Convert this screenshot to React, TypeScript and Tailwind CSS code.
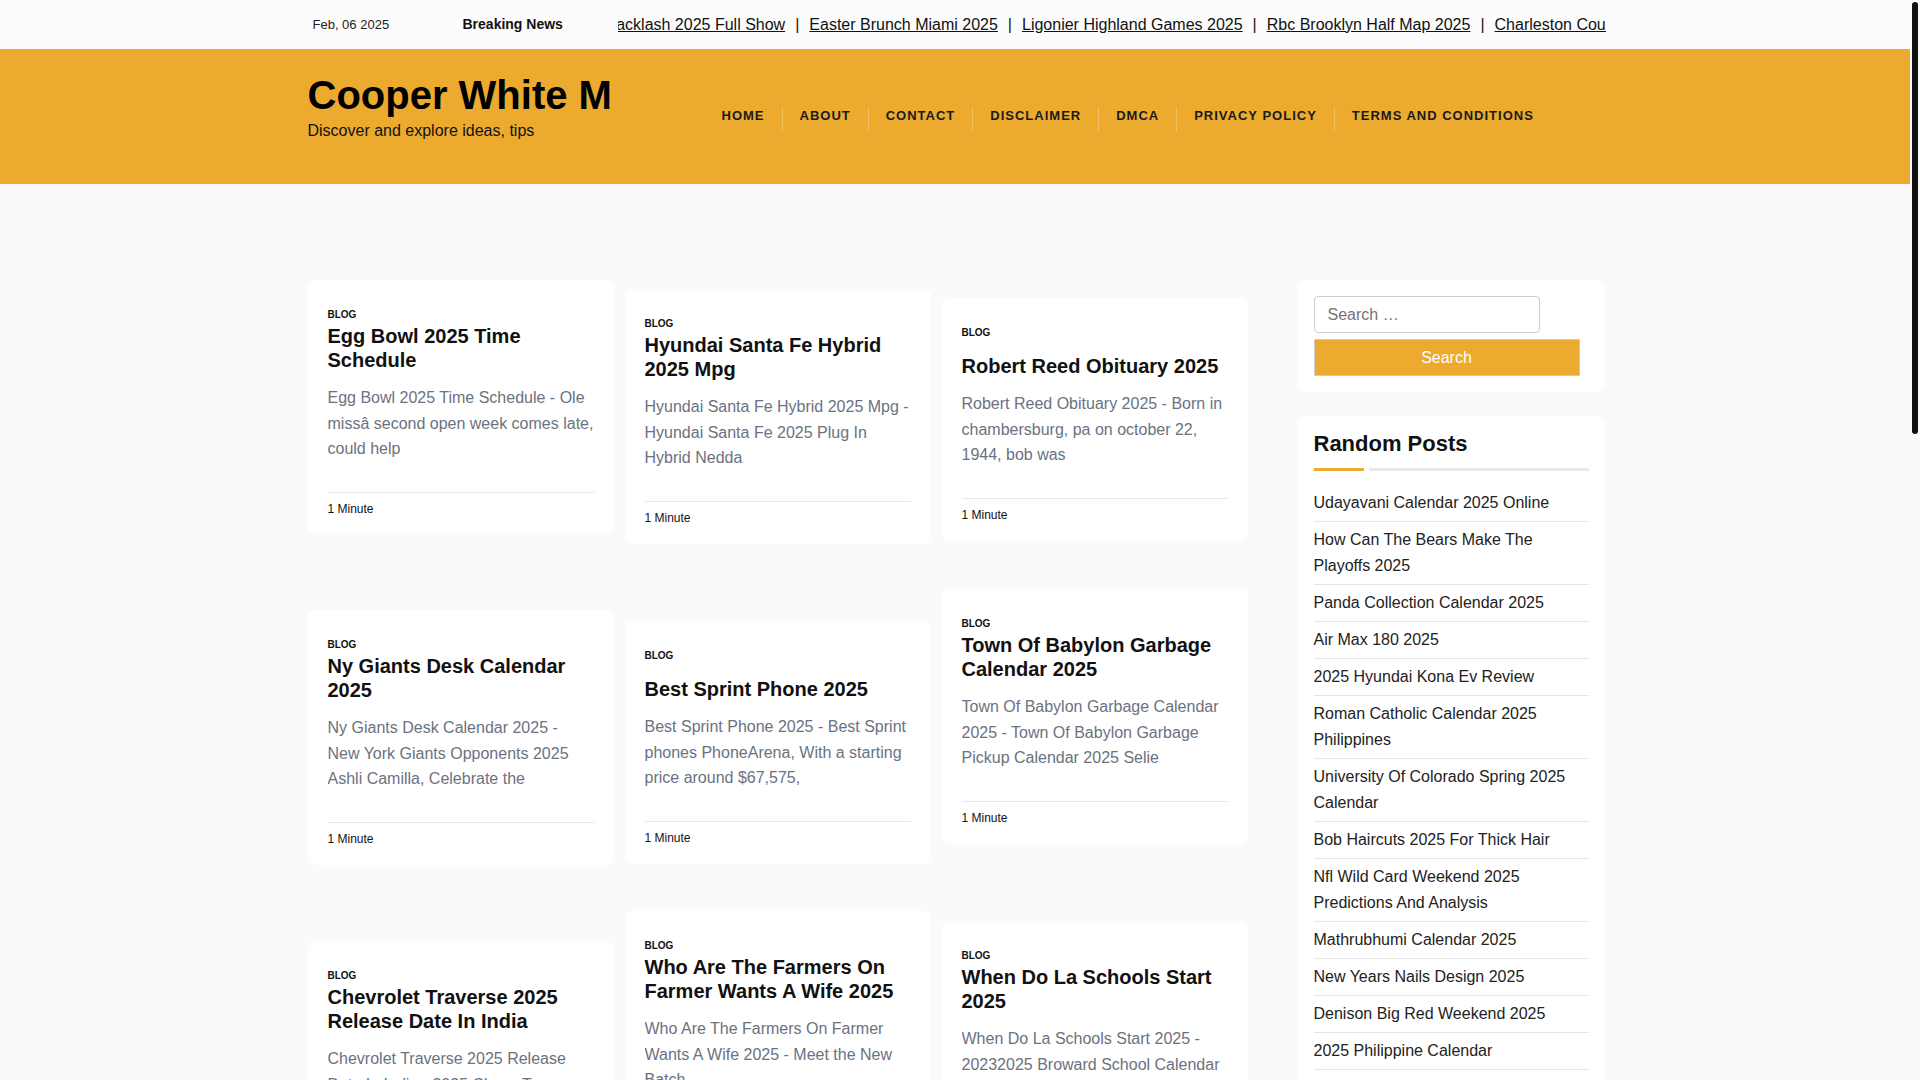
const ticker = [
  "Backlash 2025 Full Show",
  "Easter Brunch Miami 2025",
  "Ligonier Highland Games 2025",
  "Rbc Brooklyn Half Map 2025",
  "Charleston County School Calendar 2025",
];

const nav = ["Home", "About", "Contact", "Disclaimer", "DMCA", "Privacy Policy", "Terms and Conditions"];

type Post = { title: string; excerpt: string; mt: string; short?: boolean };

const columns: Post[][] = [
  [
    {
      title: "Egg Bowl 2025 Time Schedule",
      excerpt: "Egg Bowl 2025 Time Schedule - Ole missâ second open week comes late, could help",
      mt: "mt-[96px]",
    },
    {
      title: "Ny Giants Desk Calendar 2025",
      excerpt: "Ny Giants Desk Calendar 2025 - New York Giants Opponents 2025 Ashli Camilla, Celebrate the",
      mt: "mt-[75px]",
    },
    {
      title: "Chevrolet Traverse 2025 Release Date In India",
      excerpt: "Chevrolet Traverse 2025 Release Date In India - 2025 Chevy Traverse Price And Specs",
      mt: "mt-[76px]",
    },
    {
      title: "Eagles Schedule 2025 Printable",
      excerpt: "Eagles Schedule 2025 Printable - Philadelphia Eagles 2025 Schedule Printable Version",
      mt: "mt-[76px]",
    },
  ],
  [
    {
      title: "Hyundai Santa Fe Hybrid 2025 Mpg",
      excerpt: "Hyundai Santa Fe Hybrid 2025 Mpg - Hyundai Santa Fe 2025 Plug In Hybrid Nedda",
      mt: "mt-[105px]",
    },
    {
      title: "Best Sprint Phone 2025",
      excerpt: "Best Sprint Phone 2025 - Best Sprint phones PhoneArena, With a starting price around $67,575,",
      mt: "mt-[77px]",
      short: true,
    },
    {
      title: "Who Are The Farmers On Farmer Wants A Wife 2025",
      excerpt: "Who Are The Farmers On Farmer Wants A Wife 2025 - Meet the New Batch",
      mt: "mt-[47px]",
    },
    {
      title: "Lunar New Year 2025 Animal",
      excerpt: "Lunar New Year 2025 Animal - Year of the Snake, what the sign means for you",
      mt: "mt-[77px]",
      short: true,
    },
  ],
  [
    {
      title: "Robert Reed Obituary 2025",
      excerpt: "Robert Reed Obituary 2025 - Born in chambersburg, pa on october 22, 1944, bob was",
      mt: "mt-[114px]",
      short: true,
    },
    {
      title: "Town Of Babylon Garbage Calendar 2025",
      excerpt: "Town Of Babylon Garbage Calendar 2025 - Town Of Babylon Garbage Pickup Calendar 2025 Selie",
      mt: "mt-[48px]",
    },
    {
      title: "When Do La Schools Start 2025",
      excerpt: "When Do La Schools Start 2025 - 20232025 Broward School Calendar Amara",
      mt: "mt-[77px]",
    },
    {
      title: "Kentucky Derby 2025 Post Time",
      excerpt: "Kentucky Derby 2025 Post Time - What time does the race start and how to watch",
      mt: "mt-[48px]",
    },
  ],
];

const randomPosts = [
  "Udayavani Calendar 2025 Online",
  "How Can The Bears Make The Playoffs 2025",
  "Panda Collection Calendar 2025",
  "Air Max 180 2025",
  "2025 Hyundai Kona Ev Review",
  "Roman Catholic Calendar 2025 Philippines",
  "University Of Colorado Spring 2025 Calendar",
  "Bob Haircuts 2025 For Thick Hair",
  "Nfl Wild Card Weekend 2025 Predictions And Analysis",
  "Mathrubhumi Calendar 2025",
  "New Years Nails Design 2025",
  "Denison Big Red Weekend 2025",
  "2025 Philippine Calendar",
  "Calendrier 2025 Sous Excel Gratuit",
  "Nba Playoffs 2025 Bracket",
  "Ohio State Football Schedule 2025",
  "Holi 2025 Date In India",
  "Chinese New Year 2025 Calendar",
];

function PostCard({ post }: { post: Post }) {
  return (
    <article className={`${post.mt} bg-white rounded-[8px] px-[20px] pt-[27px] pb-[17px]`}>
      <div className="text-[10px] leading-[15px] font-bold uppercase text-[#111]">Blog</div>
      <h2
        className={`${post.short ? "mt-[14px]" : "mt-[2px]"} text-[20px] leading-[24px] font-bold text-[#111]`}
      >
        {post.title}
      </h2>
      <p className="mt-[13px] text-[16px] leading-[25.6px] text-[#6b7280] line-clamp-3 h-[77px]">
        {post.excerpt}
      </p>
      <div className="mt-[30px] border-t border-[#e8e8e8] pt-[7px] text-[12px] leading-[18px] text-[#111]">
        1 Minute
      </div>
    </article>
  );
}

export default function App() {
  return (
    <div className="relative bg-[#fafafa] font-['Liberation_Sans',Arial,sans-serif]">
      <div className="mr-[10px]">
        {/* Top bar */}
        <div className="bg-[#fcfcfc] h-[49px]">
          <div className="mx-auto w-[1301px] pl-[3px] h-full flex items-center">
            <div className="w-[155px] pl-[5px] text-[13px] text-[#222]">Feb, 06 2025</div>
            <div className="w-[155px] text-[14px] font-bold text-[#111]">Breaking News</div>
            <div className="flex-1 overflow-hidden">
              <div className="ml-[-12px] flex whitespace-nowrap text-[16px] text-[#111]">
                {ticker.map((t, i) => (
                  <span key={t} className="flex">
                    {i > 0 && <span className="mx-[10px]">|</span>}
                    <a href="#" className="underline">
                      {t}
                    </a>
                  </span>
                ))}
              </div>
            </div>
          </div>
        </div>

        {/* Header */}
        <header className="bg-[#ecab2e] h-[135px]">
          <div className="mx-auto w-[1301px] pl-[3px] h-full flex items-center">
            <div className="w-[397px] mb-[20px] overflow-hidden">
              <div className="text-[40px] leading-[48px] font-bold text-black whitespace-nowrap">Cooper White M</div>
              <div className="text-[16px] leading-[24px] text-[#111]">Discover and explore ideas, tips</div>
            </div>
            <nav className="flex mt-[6px]">
              {nav.map((n, i) => (
                <a
                  key={n}
                  href="#"
                  className={`${i > 0 ? "border-l border-white/25" : ""} h-[25px] px-[17px] pt-[1px] text-[13px] leading-[16px] font-bold uppercase tracking-[1px] text-[#1a1a1a]`}
                >
                  {n}
                </a>
              ))}
            </nav>
          </div>
        </header>

        {/* Main */}
        <main className="mx-auto w-[1301px] pl-[3px] flex items-start pb-[120px]">
          <div className="flex gap-[11px]">
            {columns.map((col, ci) => (
              <div key={ci} className="w-[306px] flex flex-col">
                {col.map((p) => (
                  <PostCard key={p.title} post={p} />
                ))}
              </div>
            ))}
          </div>

          <aside className="ml-[50px] w-[306px] mt-[96px] flex flex-col gap-[24px]">
            <div className="bg-white rounded-[8px] p-[16px] pr-[23px]">
              <input
                type="text"
                placeholder="Search …"
                className="block w-[226px] h-[37px] border border-[#ccc] rounded-[4px] px-[13px] text-[16px] text-[#333] placeholder:text-[#757575] outline-none bg-white"
              />
              <button className="block mt-[6px] w-[266px] h-[37px] bg-[#ecab2e] border border-[#ccc] text-[16px] text-white">
                Search
              </button>
            </div>

            <div className="bg-white rounded-[8px] pt-[15px] pb-[20px] pl-[16px] pr-[15px]">
              <h3 className="text-[22px] leading-[26.4px] font-bold text-[#111]">Random Posts</h3>
              <div className="mt-[11px] flex gap-[5px] h-[3px]">
                <div className="w-[50px] bg-[#ecab2e]" />
                <div className="flex-1 bg-[#e8e8e8]" />
              </div>
              <ul className="mt-[14px]">
                {randomPosts.map((r) => (
                  <li key={r} className="py-[5px] border-b border-[#e5e5e5] text-[16px] leading-[26px] text-[#222]">
                    <a href="#">{r}</a>
                  </li>
                ))}
              </ul>
            </div>
          </aside>
        </main>

        <footer className="bg-[#222] h-[400px]">
          <div className="mx-auto w-[1301px] pl-[3px] pt-[40px] text-[14px] text-[#bbb]">© 2025 Cooper White M</div>
        </footer>
      </div>

      {/* Scrollbar */}
      <div className="fixed top-0 right-0 w-[10px] h-screen bg-[#fafafa]">
        <div className="absolute top-[2px] right-[2px] w-[6px] h-[432px] rounded-[3px] bg-[#111]" />
      </div>
    </div>
  );
}
